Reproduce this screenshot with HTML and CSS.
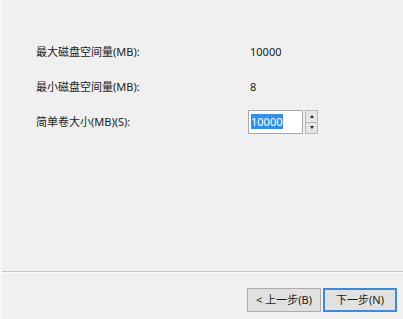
FILE: index.html
```html
<!DOCTYPE html>
<html lang="zh-CN">
<head>
<meta charset="utf-8">
<title>新建简单卷向导</title>
<link rel="stylesheet" href="styles.css">
</head>
<body>
<div class="page">
  <div class="content">
    <div class="form">
      <div class="label">最大磁盘空间量(MB):</div>
      <div class="value">10000</div>
      <div class="label">最小磁盘空间量(MB):</div>
      <div class="value">8</div>
      <div class="label">简单卷大小(MB)(S):</div>
      <div class="value">
        <div class="spin">
          <div class="edit"><span class="sel">10000</span></div>
          <div class="spin-btns">
            <div class="spin-btn"><span class="tri-up"></span></div>
            <div class="spin-btn"><span class="tri-down"></span></div>
          </div>
        </div>
      </div>
    </div>
  </div>
  <div class="footer">
    <div class="btn">&lt; 上一步(B)</div>
    <div class="btn default">下一步(N)</div>
  </div>
</div>
</body>
</html>
```
FILE: styles.css
```css
html, body {
  margin: 0;
  padding: 0;
  background: #f0f0f0;
}
body {
  font-family: "Noto Sans", "Noto Sans CJK SC", sans-serif;
  font-size: 11px;
  color: #1a1a1a;
}
.page {
  width: 403px;
  height: 319px;
  display: flex;
  flex-direction: column;
  box-sizing: border-box;
  border-left: 2px solid #f6f6f6;
}
.content {
  height: 271px;
  box-sizing: border-box;
  padding: 40px 0 0 34px;
}
.form {
  display: grid;
  grid-template-columns: 214px auto;
  grid-auto-rows: 24px;
  row-gap: 11px;
  align-items: center;
}
.label, .value {
  line-height: 14px;
}
.spin {
  display: flex;
  gap: 2px;
  align-items: stretch;
  height: 24px;
  margin-left: -2px;
}
.edit {
  width: 55px;
  box-sizing: border-box;
  background: #fff;
  border: 1px solid #a9a9a9;
  padding: 3px 0 0 2px;
}
.sel {
  display: inline-block;
  background: #3390e6;
  color: #fff;
  line-height: 15px;
  padding: 0 1px 0 0;
}
.spin-btns {
  width: 11px;
  display: flex;
  flex-direction: column;
  border: 1px solid #b8b8b8;
  background: #e6e6e6;
}
.spin-btn {
  flex: 1;
  display: flex;
  align-items: center;
  justify-content: center;
}
.spin-btn + .spin-btn {
  border-top: 1px solid #b8b8b8;
}
.tri-up {
  width: 0;
  height: 0;
  border-left: 2.5px solid transparent;
  border-right: 2.5px solid transparent;
  border-bottom: 3px solid #222;
}
.tri-down {
  width: 0;
  height: 0;
  border-left: 2.5px solid transparent;
  border-right: 2.5px solid transparent;
  border-top: 3px solid #222;
}
.footer {
  flex: 1;
  border-top: 1px solid #c6c6c6;
  box-shadow: inset 0 1px 0 #fbfbfb;
  display: flex;
  justify-content: flex-end;
  align-items: flex-start;
  gap: 2px;
  padding: 16px 6px 0 0;
}
.btn {
  width: 74px;
  height: 24px;
  box-sizing: border-box;
  background: #e1e1e1;
  border: 1px solid #adadad;
  display: flex;
  align-items: center;
  justify-content: center;
  line-height: 14px;
  color: #1a1a1a;
}
.btn.default {
  border: 2px solid #3c8ad8;
}
```
